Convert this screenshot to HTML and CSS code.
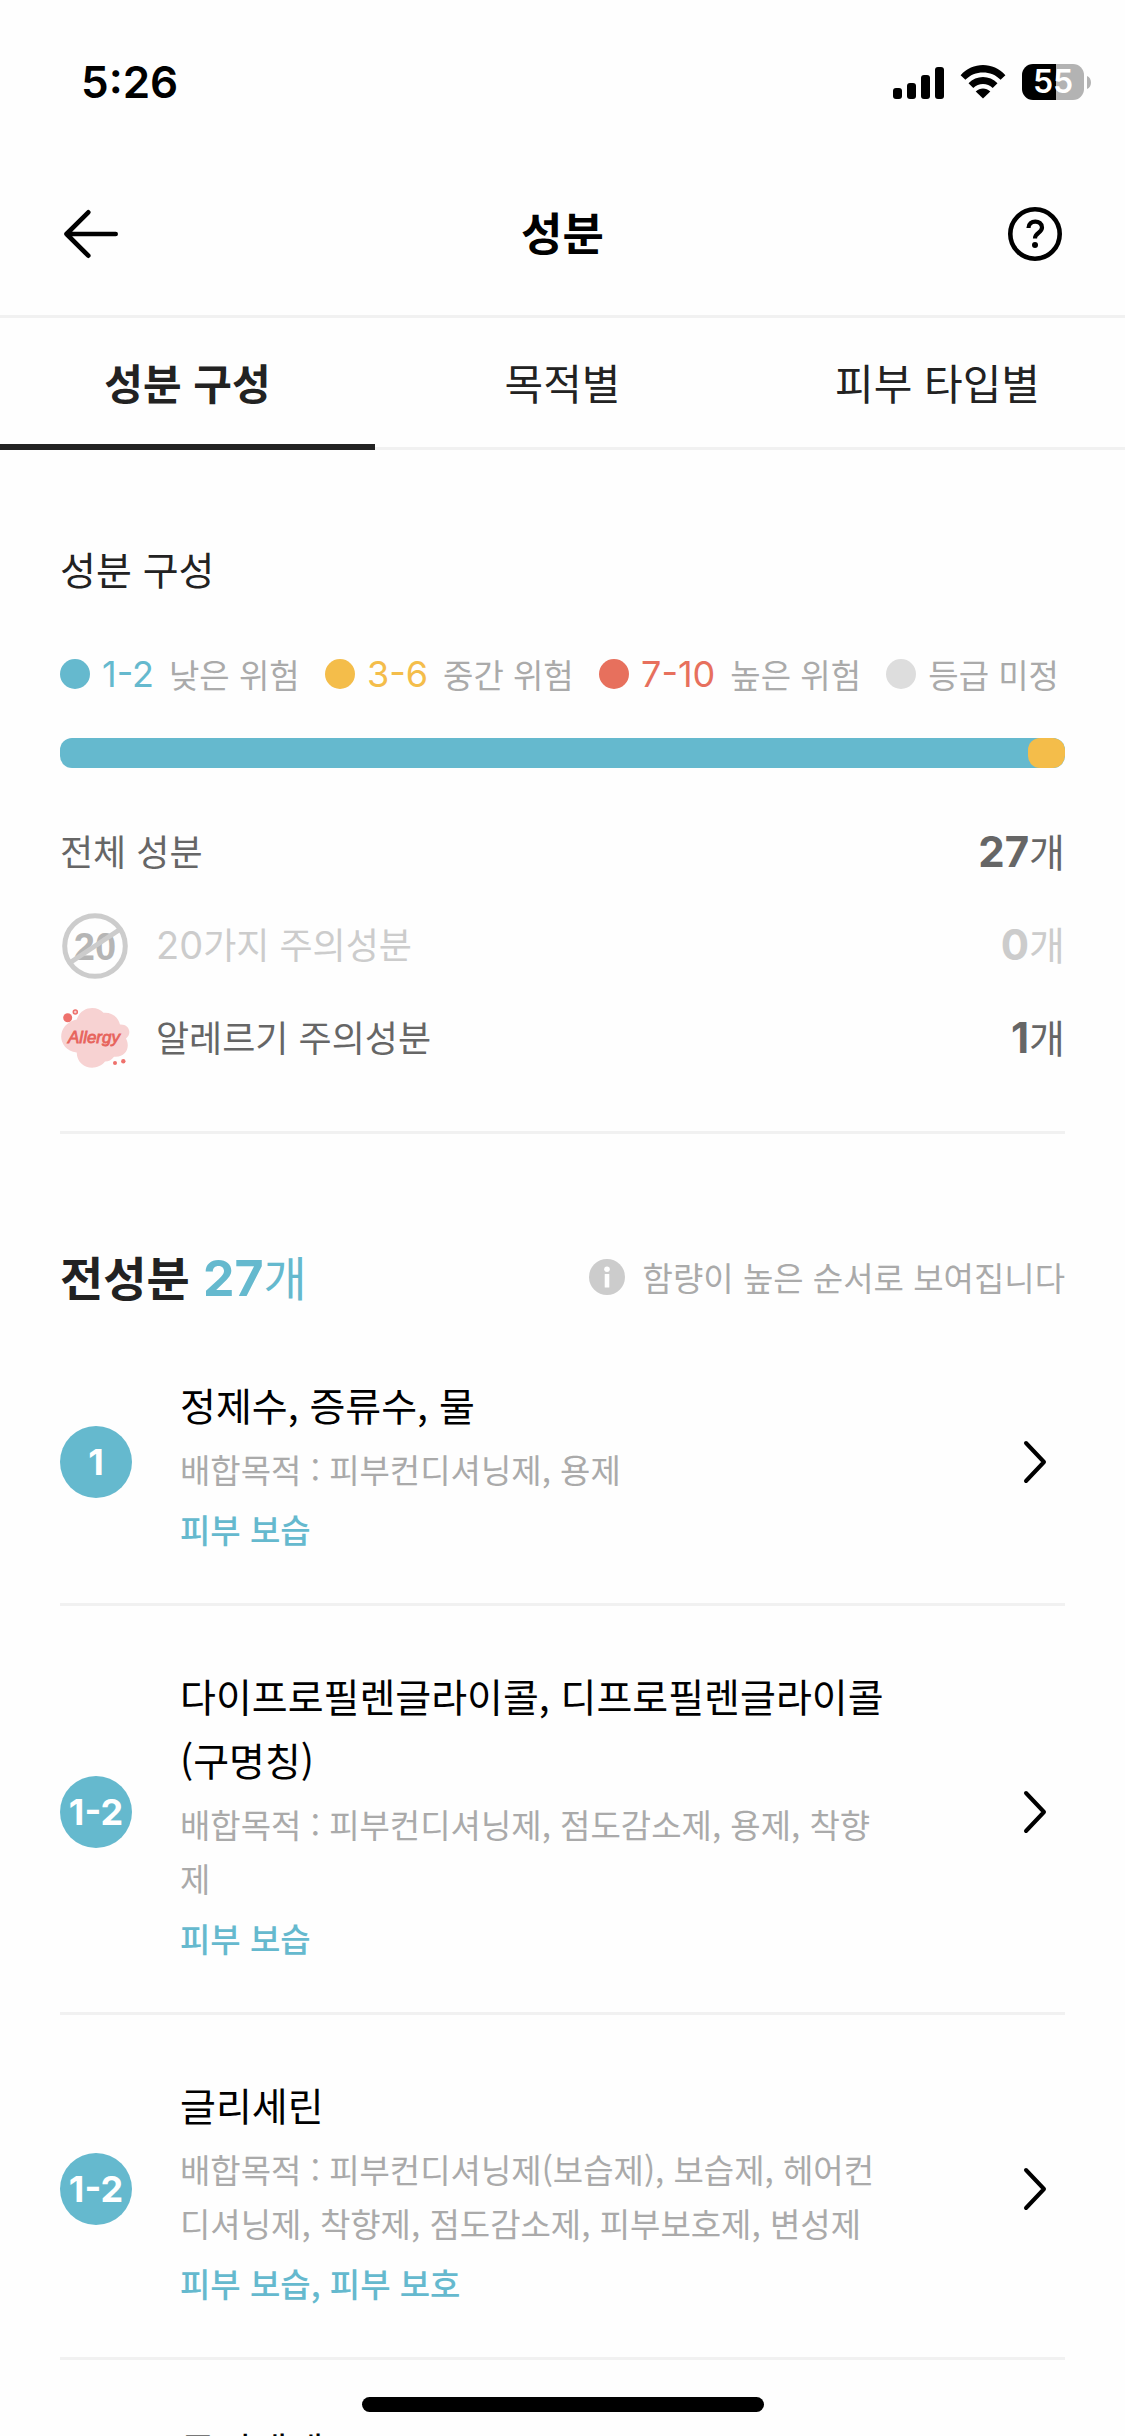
FILE: index.html
```html
<!DOCTYPE html>
<html lang="ko">
<head>
<meta charset="utf-8">
<meta name="viewport" content="width=device-width, initial-scale=1">
<title>성분</title>
<link rel="stylesheet" href="styles.css">
</head>
<body>
<div class="screen">
  <div class="statusbar">
    <span class="clock">5:26</span>
    <div class="status-icons">
      <svg class="signal" width="51" height="33" viewBox="0 0 51 33" aria-hidden="true">
        <rect x="0" y="22" width="9" height="11" rx="3"/><rect x="14" y="17" width="9" height="16" rx="3"/><rect x="28" y="9" width="9" height="24" rx="3"/><rect x="42" y="1" width="9" height="32" rx="3"/>
      </svg>
      <svg class="wifi" width="46" height="34" viewBox="0 0 46 34" aria-hidden="true">
        <path d="M.6 10.2C12.600-3.400 33.400-3.400 45.400 10.200L40.600 14.800C31.500 5 14.500 5 5.400 14.800Z"/>
        <path d="M8.500 18.200C16.500 9.800 29.500 9.800 37.500 18.200L32.700 22.900C27.500 17.700 18.500 17.700 13.300 22.900Z"/>
        <path d="M15.700 26.400C20 22.500 26 22.500 30.300 26.400L23 33.500Z"/>
      </svg>
      <div class="battery"><span class="battery-body">55</span><svg width="4" height="13" viewBox="0 0 4 13" aria-hidden="true"><path d="M0 0C5.300 2 5.300 11 0 13Z" fill="#b3b3b3"/></svg></div>
    </div>
  </div>

  <header class="appbar">
    <button class="icon-button" aria-label="뒤로">
      <svg width="60" height="60" viewBox="0 0 60 60" fill="none" stroke="#000" stroke-width="4.600" stroke-linecap="round" stroke-linejoin="round" aria-hidden="true"><path d="M28.300 8.300L6.500 30L28.300 51.700M6.500 30H55.700"/></svg>
    </button>
    <h1 class="appbar-title">성분</h1>
    <button class="icon-button" aria-label="도움말">
      <svg width="60" height="60" viewBox="0 0 60 60" fill="none" stroke="#000" aria-hidden="true"><circle cx="30" cy="30" r="24.700" stroke-width="4.600"/><path d="M23.500 24C23.500 15.500 37 15.500 37 23.500C37 29 30 28.500 30 34.500" stroke-width="4.200"/><circle cx="30" cy="41" r="3" fill="#000" stroke="none"/></svg>
    </button>
  </header>

  <nav class="tabs">
    <a class="tab tab-active" href="#composition" aria-current="page">성분 구성</a>
    <a class="tab" href="#purpose">목적별</a>
    <a class="tab" href="#skin-type">피부 타입별</a>
  </nav>

  <main class="content">
    <section class="summary" id="composition">
      <h2 class="summary-title">성분 구성</h2>
      <ul class="legend">
        <li class="legend-item"><span class="dot low-bg"></span><span class="range low">1-2</span><span>낮은 위험</span></li>
        <li class="legend-item"><span class="dot mid-bg"></span><span class="range mid">3-6</span><span>중간 위험</span></li>
        <li class="legend-item"><span class="dot high-bg"></span><span class="range high">7-10</span><span>높은 위험</span></li>
        <li class="legend-item"><span class="dot none-bg"></span><span>등급 미정</span></li>
      </ul>
      <div class="ratio"><span class="ratio-mid" style="width:3.7%"></span></div>
      <ul class="counts">
        <li class="count-row"><span class="count-label">전체 성분</span><span class="count-value"><b class="number">27</b>개</span></li>
        <li class="count-row count-empty">
          <svg class="count-icon" width="72" height="72" viewBox="0 0 72 72" aria-hidden="true">
            <text x="35" y="50" text-anchor="middle" class="badge-number">20</text>
            <circle cx="35" cy="36" r="30.300" fill="none" stroke="#ccc" stroke-width="5"/>
            <path d="M11 52L59 20" stroke="#ccc" stroke-width="5"/>
          </svg>
          <span class="count-label"><span class="number">20</span>가지 주의성분</span><span class="count-value"><b class="number">0</b>개</span>
        </li>
        <li class="count-row">
          <svg class="count-icon" width="72" height="72" viewBox="0 1 72 72" aria-hidden="true">
            <path fill="#f7d2d2" d="M16.700 17.500C21 4 37 3 43.500 10.700C52 10 58 15 60 22.500C69 22 72.500 31 66 36.500C71 46 65 56 54 54.700C51 58 49 59.500 45 59.500C37 70 17 67 16.700 50.500C-4 47-4 22 16.700 17.500Z"/>
            <circle cx="7.700" cy="15.700" r="4.500" fill="#ee716c"/><circle cx="15.300" cy="10" r="2" fill="#f7d2d2" stroke="#ee716c" stroke-width="1.500"/><circle cx="55" cy="61" r="2" fill="#ee716c"/><circle cx="63.300" cy="59.300" r="2.200" fill="#ee716c"/>
            <text x="34" y="41" text-anchor="middle" class="badge-allergy">Allergy</text>
          </svg>
          <span class="count-label">알레르기 주의성분</span><span class="count-value"><b class="number">1</b>개</span>
        </li>
      </ul>
    </section>

    <section class="ingredients">
      <div class="ingredients-head">
        <h2 class="ingredients-title">전성분 <span class="low"><span class="number">27</span><span class="unit">개</span></span></h2>
        <p class="note"><svg width="36" height="36" viewBox="0 0 36 36" aria-hidden="true"><circle cx="18" cy="18" r="18" fill="#ccc"/><circle cx="18" cy="10.300" r="2.800" fill="#fff"/><rect x="15.700" y="15" width="4.600" height="13.500" rx=".5" fill="#fff"/></svg>함량이 높은 순서로 보여집니다</p>
      </div>
      <ul class="ingredient-list">
        <li><a class="ingredient" href="#i1">
          <span class="grade">1</span>
          <span class="ingredient-text"><span class="name">정제수, 증류수, 물</span><span class="purpose">배합목적 : 피부컨디셔닝제, 용제</span><span class="effect">피부 보습</span></span>
          <svg class="chevron" width="24" height="44" viewBox="0 0 24 44" aria-hidden="true"><path d="M3 3L21 22L3 41"/></svg>
        </a></li>
        <li><a class="ingredient" href="#i2">
          <span class="grade">1-2</span>
          <span class="ingredient-text"><span class="name">다이프로필렌글라이콜, 디프로필렌글라이콜(구명칭)</span><span class="purpose">배합목적 : 피부컨디셔닝제, 점도감소제, 용제, 착향제</span><span class="effect">피부 보습</span></span>
          <svg class="chevron" width="24" height="44" viewBox="0 0 24 44" aria-hidden="true"><path d="M3 3L21 22L3 41"/></svg>
        </a></li>
        <li><a class="ingredient" href="#i3">
          <span class="grade">1-2</span>
          <span class="ingredient-text"><span class="name">글리세린</span><span class="purpose">배합목적 : 피부컨디셔닝제(보습제), 보습제, 헤어컨디셔닝제, 착향제, 점도감소제, 피부보호제, 변성제</span><span class="effect">피부 보습, 피부 보호</span></span>
          <svg class="chevron" width="24" height="44" viewBox="0 0 24 44" aria-hidden="true"><path d="M3 3L21 22L3 41"/></svg>
        </a></li>
        <li><a class="ingredient" href="#i4">
          <span class="ingredient-text ingredient-partial"><span class="name">글리세레스-26</span></span>
        </a></li>
      </ul>
    </section>
  </main>
  <div class="home-indicator"></div>
</div>
</body>
</html>
```
FILE: styles.css
```css
* { box-sizing: border-box; }
body, h1, h2, p, ul { margin: 0; padding: 0; }
ul { list-style: none; }
a { color: inherit; text-decoration: none; }

body {
  background: #fefefe;
  color: #222;
  font-family: "Noto Sans CJK KR", sans-serif;
}

.screen {
  position: relative;
  height: 100vh;
  overflow: hidden;
}

.low { color: #65b9ce; }
.mid { color: #f4bd4a; }
.high { color: #e7705d; }
.low-bg { background: #65b9ce; }
.mid-bg { background: #f4bd4a; }
.high-bg { background: #e7705d; }
.none-bg { background: #ddd; }
.number { font-family: Inter, sans-serif; }

.statusbar {
  display: flex;
  justify-content: space-between;
  align-items: center;
  height: 132px;
  padding: 32px 34px 0 81px;
  color: #000;
  font-family: Inter, sans-serif;
}
.clock { font-size: 44px; font-weight: 600; }
.status-icons { display: flex; align-items: center; gap: 16px; }
.battery { display: flex; align-items: center; gap: 3px; }
.battery-body {
  width: 62px;
  border-radius: 11px;
  background: linear-gradient(90deg, #000 55%, #b3b3b3 55%);
  color: #fff;
  font-size: 32px;
  font-weight: 600;
  line-height: 36px;
  text-align: center;
}

.appbar {
  display: flex;
  justify-content: space-between;
  align-items: center;
  height: 186px;
  padding: 20px 60px 0;
  border-bottom: 3px solid #f1f1f1;
  color: #000;
}
.icon-button { width: 60px; height: 60px; padding: 0; border: 0; background: none; }
.appbar-title { padding-bottom: 3px; font-size: 45px; font-weight: 700; line-height: 60px; }

.tabs { display: flex; height: 132px; }
.tab {
  flex: 1;
  border-bottom: 3px solid #f1f1f1;
  font-size: 42px;
  line-height: 128px;
  text-align: center;
}
.tab-active { border-bottom: 6px solid #222; font-weight: 700; }

.content { padding: 0 60px; }
.summary { padding: 90px 0 46px; border-bottom: 3px solid #f1f1f1; }
.summary-title { font-size: 39px; font-weight: 400; line-height: 56px; }
.legend { display: flex; justify-content: space-between; margin-top: 54px; padding-right: 6px; }
.legend-item {
  display: flex;
  align-items: center;
  gap: 12px;
  color: #aaa;
  font-size: 33px;
  line-height: 48px;
  white-space: nowrap;
}
.dot { width: 30px; height: 30px; border-radius: 50%; }
.range { margin-right: 3px; font-family: Inter, sans-serif; font-size: 36px; }
.ratio {
  display: flex;
  justify-content: flex-end;
  height: 30px;
  margin-top: 40px;
  border-radius: 12px;
  background: #65b9ce;
  overflow: hidden;
}
.ratio-mid { border-radius: 12px; background: #f4bd4a; }

.counts { margin-top: 38px; }
.count-row {
  display: flex;
  align-items: center;
  height: 93px;
  color: #666;
  font-size: 36px;
}
.count-icon { margin-right: 24px; }
.count-label { flex: 1; padding-bottom: 6px; }
.count-label .number { font-size: 38px; }
.count-value { padding-bottom: 6px; font-size: 39px; }
.count-value .number { font-size: 42px; }
.count-empty { color: #ccc; }
.badge-number { fill: #b5b5b5; font: 700 38px "Liberation Sans", sans-serif; }
.badge-allergy { fill: #e7645c; stroke: #e7645c; stroke-width: .8; font: italic 17px "Liberation Sans", sans-serif; }

.ingredients-head {
  display: flex;
  justify-content: space-between;
  align-items: center;
  margin-top: 106px;
}
.ingredients-title { font-size: 47px; font-weight: 700; line-height: 72px; }
.ingredients-title .number { font-size: 50px; }
.unit { font-weight: 400; }
.note { display: flex; align-items: center; gap: 18px; color: #aaa; font-size: 33px; }

.ingredient {
  display: flex;
  align-items: center;
  padding: 53px 18px 47px 0;
  border-bottom: 3px solid #f1f1f1;
}
.ingredient-list li:first-child .ingredient { padding-top: 54px; }
.grade {
  flex: none;
  width: 72px;
  border-radius: 50%;
  background: #65b9ce;
  color: #fff;
  font-family: Inter, sans-serif;
  font-size: 36px;
  font-weight: 700;
  line-height: 72px;
  text-align: center;
}
.ingredient-text {
  display: flex;
  flex: 1;
  flex-direction: column;
  margin: 0 130px 0 48px;
  padding-top: 4px;
  line-height: 54px;
  word-break: break-all;
}
.ingredient-partial { margin-left: 120px; }
.name { color: #000; font-size: 39px; line-height: 64px; }
.purpose { margin-top: 6px; color: #aaa; font-size: 33px; }
.effect { margin-top: 6px; color: #65b9ce; font-size: 33px; font-weight: 500; }
.chevron { fill: none; stroke: #000; stroke-width: 4; stroke-linecap: round; stroke-linejoin: round; }

.home-indicator {
  position: absolute;
  bottom: 24px;
  left: 50%;
  width: 402px;
  height: 15px;
  margin-left: -201px;
  border-radius: 8px;
  background: #000;
}
```
